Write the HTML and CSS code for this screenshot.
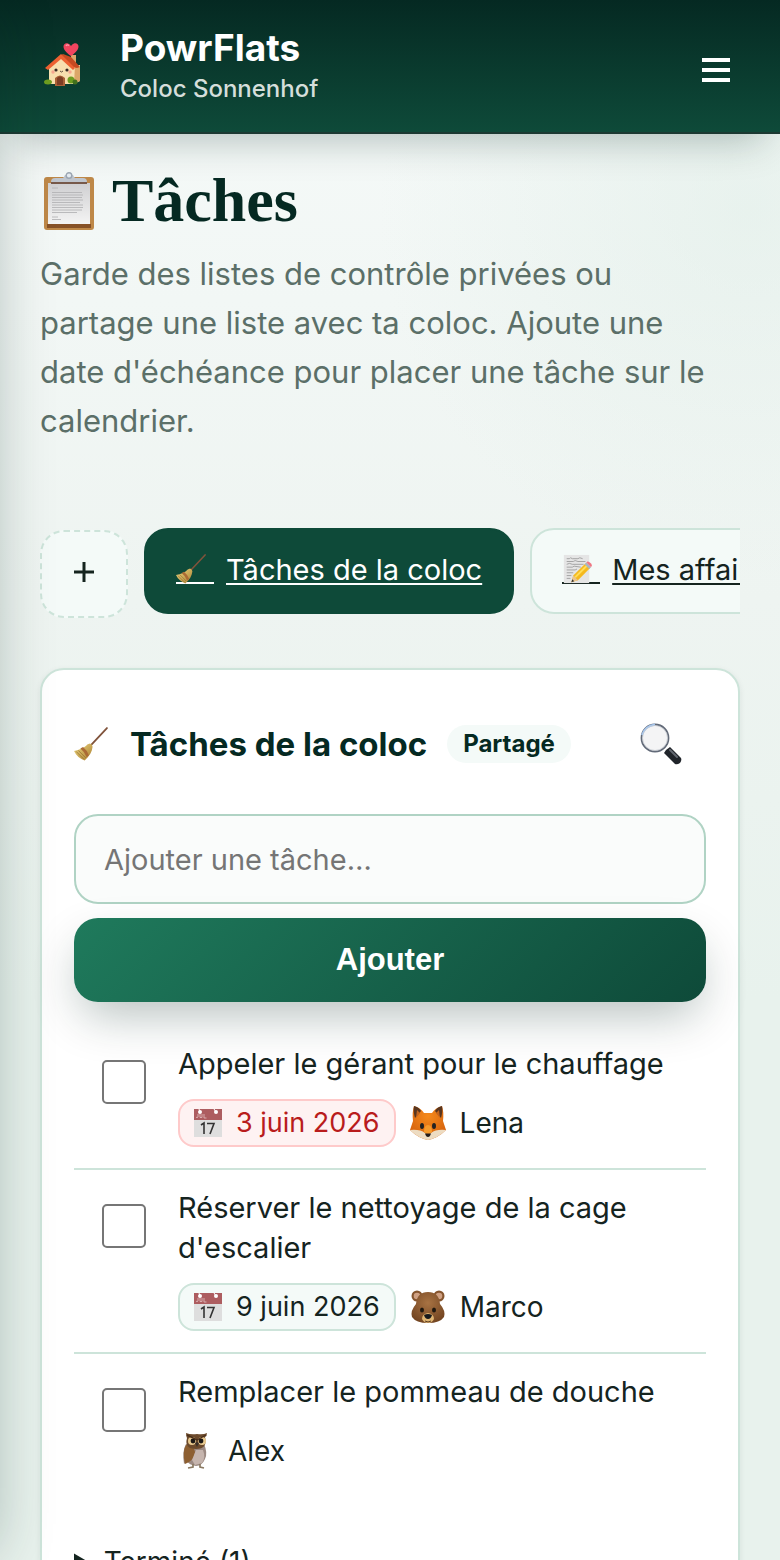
FILE: index.html
```html
<!DOCTYPE html>
<html lang="fr">
<head>
    <meta charset="UTF-8">
    <meta name="viewport" content="width=device-width, initial-scale=1.0">
    <title>Tâches - PowrFlats</title>
    <link rel="stylesheet" href="styles.css">
</head>
<body>
    <!-- Shared icons -->
    <svg class="sprite" aria-hidden="true">
        <defs>
            <linearGradient id="straw" x1="0" y1="0" x2="1" y2="1">
                <stop offset="0" stop-color="#f0dc86"/>
                <stop offset="1" stop-color="#a87b2c"/>
            </linearGradient>
            <linearGradient id="paper" x1="0" y1="0" x2="0" y2="1">
                <stop offset="0" stop-color="#cfcfd1"/>
                <stop offset="1" stop-color="#f4f4f4"/>
            </linearGradient>
            <radialGradient id="fur" cx=".5" cy=".35" r=".7">
                <stop offset="0" stop-color="#a87343"/>
                <stop offset="1" stop-color="#70421f"/>
            </radialGradient>
            <radialGradient id="foxfur" cx=".5" cy=".3" r=".7">
                <stop offset="0" stop-color="#f58a1c"/>
                <stop offset="1" stop-color="#d35f0c"/>
            </radialGradient>
        </defs>
        <symbol id="broom" viewBox="0 0 32 32">
            <path d="M31 1 16 17" stroke="#80533b" stroke-width="1.7" stroke-linecap="round"/>
            <path d="M15 15.500q2 .5 2.500 3c-.5 5-3 9-7.500 13C6 30 2 27 0 22.500c5-1 10-3 12.500-6z" fill="url(#straw)"/>
            <path d="M6 20.200q4 3 6 8.300l2-2q-1.500-4.500-5.500-7.700z" fill="#ab6b35"/>
            <path d="m2 23 7 7M4 22l7 7" stroke="#8b6427" stroke-width=".6"/>
        </symbol>
        <symbol id="calendar" viewBox="0 0 28 28">
            <path d="M0 0h28v28H0z" fill="#dedede"/>
            <path d="M0 0h28v11H0z" fill="#ad5d60"/>
            <circle cx="6" cy="3" r="2" fill="#fff"/>
            <circle cx="22" cy="3" r="2" fill="#fff"/>
            <path d="M5 0l1 3M20 0l2 3" stroke="#fff" stroke-width="1"/>
            <path d="M4 5v3q-1 1.500-2 0M6 5v3.500h2V5M10 5v4h2.500" fill="none" stroke="#dcb4b5" stroke-width=".9"/>
            <path d="m7 16 3-2v11M13 14.500h7L16 25" fill="none" stroke="#333" stroke-width="1.600"/>
        </symbol>
    </svg>

    <aside class="drawer" aria-hidden="true"></aside>

    <header class="topbar">
        <svg class="logo" viewBox="0 0 38 46" aria-hidden="true">
            <path d="M27 12h5v12h-5z" fill="#d9a66b"/>
            <path d="m5 23 13-10 13 10 5-1v16l-6 3H5z" fill="#f8dfae"/>
            <path d="m31 23 5 1v14l-6 2z" fill="#dca668"/>
            <path d="m17 12 2-1 8 3 9 10-3 1-5-1z" fill="#c64a21"/>
            <path d="M1 25 17 11l14 14-2 2-12-11L4 27z" fill="#ed6131"/>
            <path d="M11 43v-8q5-5 10 0v8z" fill="#aa6037"/>
            <path d="M13 42v-7q3-3 6 0v7z" fill="#7e3d24"/>
            <ellipse cx="4" cy="39" rx="4" ry="2.500" fill="#6e9d20"/>
            <circle cx="27" cy="37" r="3.500" fill="#6e9d20"/>
            <circle cx="31" cy="39" r="2.500" fill="#426f1d"/>
            <circle cx="12" cy="27" r="1.600" fill="#3a2a24"/>
            <circle cx="23" cy="27" r="1.600" fill="#3a2a24"/>
            <circle cx="9" cy="29" r="1.700" fill="#f6a790"/>
            <circle cx="26" cy="29" r="1.700" fill="#f6a790"/>
            <path d="M16 28q1.500 2 3 0" fill="none" stroke="#3a2a24" stroke-width=".8"/>
            <path d="M27 13C16 6 19-1 24 .5q2 .5 3 2.500 1-2 3-2.500c5-1.500 8 5.500-3 12.500z" fill="#f0455f"/>
            <path d="M22 3q1-2 3-.5" fill="none" stroke="#ff9dab" stroke-width="1.300"/>
        </svg>
        <div class="brand">
            <span class="brand-name">PowrFlats</span>
            <span class="brand-sub">Coloc Sonnenhof</span>
        </div>
        <button type="button" class="menu-btn" aria-label="Menu">
            <span></span>
            <span></span>
            <span></span>
        </button>
    </header>

    <main>
        <h1>
            <svg class="clipboard" viewBox="0 0 50 58" aria-hidden="true">
                <rect y="5" width="50" height="53" rx="3" fill="#be8848"/>
                <path d="M3 52h44v4H3z" fill="#875127"/>
                <path d="M4 11h42v41H4z" fill="url(#paper)"/>
                <path d="M8 16h6M8 20.500h30M8 23h31M8 25.500h30M8 28h31M8 30.500h28M8 33h31M8 35.500h31M8 38h30M8 40.500h25M8 45h6M8 47.500h9" stroke="#b4b4b7" stroke-width=".9"/>
                <path d="M7 10h36v2H7z" fill="#77594a"/>
                <path d="M7 10q0-4 4-4h8q1-1 2-3h8q1 2 2 3h8q4 0 4 4z" fill="#bfc5cd"/>
                <circle cx="25" cy="3.500" r="2.800" fill="#e4eaf0" stroke="#9ba6b2" stroke-width="1.400"/>
            </svg>
            Tâches
        </h1>
        <p class="intro">Garde des listes de contrôle privées ou partage une liste avec ta coloc. Ajoute une date d'échéance pour placer une tâche sur le calendrier.</p>

        <nav class="tabs" aria-label="Listes">
            <button type="button" class="tab-add" aria-label="Nouvelle liste">
                <svg viewBox="0 0 20 20" aria-hidden="true"><path d="M10 0v20M0 10h20" stroke="#15241f" stroke-width="3"/></svg>
            </button>
            <a href="#coloc" class="tab active">
                <span class="tab-icon"><svg viewBox="0 0 32 32" aria-hidden="true"><use href="#broom"/></svg></span>
                <span class="tab-text">Tâches de la coloc</span>
            </a>
            <a href="#perso" class="tab">
                <span class="tab-icon">
                    <svg viewBox="0 0 32 32" aria-hidden="true">
                        <path d="M2 1h27v30H2z" fill="#e5e5e5"/>
                        <path d="M5 5h3l1-1 2 1h6l2-1 3 1M5 8h7l2-1 3 1h8M5 11l3-1 3 1h12M5 14h6l2-1 7 1M5 17h9l2-1M5 20h7M5 23h5M5 26h4" fill="none" stroke="#999" stroke-width=".9"/>
                        <path d="m10 30 2-7L25 10l5 5-13 13z" fill="#f5b91e"/>
                        <path d="m14 25 13-13" stroke="#ffdd58" stroke-width="2"/>
                        <path d="m10 30 2-7 5 5z" fill="#e9c390"/>
                        <path d="m10 30 1-3 2 2z" fill="#333"/>
                        <path d="m24 11 2-2 5 5-2 2z" fill="#a9b7c0"/>
                        <path d="m26 9 1-1q3 0 5 4l-1 2z" fill="#ef7783"/>
                    </svg>
                </span>
                <span class="tab-text">Mes affaires</span>
            </a>
        </nav>

        <section class="card" id="coloc">
            <div class="card-head">
                <svg class="card-icon" viewBox="0 0 32 32" aria-hidden="true"><use href="#broom"/></svg>
                <h2>Tâches de la coloc</h2>
                <span class="badge">Partagé</span>
                <button type="button" class="search-btn" aria-label="Rechercher">
                    <svg viewBox="0 0 42 42" aria-hidden="true">
                        <path d="m26 27 4-3 11 11q1 2-1 5-3 2-5 1L24 30z" fill="#20242a"/>
                        <path d="m30 27 7 7" stroke="#646a72" stroke-width="2" stroke-linecap="round"/>
                        <circle cx="15" cy="15" r="13.500" fill="#f4f4f5" stroke="#626a78" stroke-width="1.800"/>
                        <path d="M2 12Q5 3 15 1.500" fill="none" stroke="#a5c6ee" stroke-width="2"/>
                        <circle cx="15" cy="15" r="12.500" fill="none" stroke="#c8ccd2" stroke-width=".8"/>
                    </svg>
                </button>
            </div>

            <form class="add-form">
                <input type="text" name="task" placeholder="Ajouter une tâche…" aria-label="Ajouter une tâche">
                <button type="submit">Ajouter</button>
            </form>

            <ul class="tasks">
                <li>
                    <input type="checkbox" id="task1">
                    <div class="task-body">
                        <label for="task1">Appeler le gérant pour le chauffage</label>
                        <div class="meta">
                            <span class="due late"><svg viewBox="0 0 28 28" aria-hidden="true"><use href="#calendar"/></svg>3 juin 2026</span>
                            <span class="person">
                                <svg viewBox="0 0 36 36" aria-hidden="true">
                                    <path d="M4 1q7 2 10 7h8Q25 3 32 1q2 6 1 15l3 9q-8 8-18 10Q8 33 0 25l3-9Q2 7 4 1z" fill="url(#foxfur)"/>
                                    <path d="M4 1q5 1 7 5l-6 7Q3 6 4 1zM32 1q-5 1-7 5l6 7q2-7 1-12z" fill="#59361f"/>
                                    <path d="m7 5 3 3-4 5zM29 5l-3 3 4 5z" fill="#c5651d"/>
                                    <path d="M0 25q10-1 15 3 3 2 6 0 5-4 15-3-8 8-18 10Q8 33 0 25z" fill="#eddcc2"/>
                                    <path d="M18 20q4 0 4 7l-4 3-4-3q0-7 4-7z" fill="#f69b2c"/>
                                    <ellipse cx="12" cy="21" rx="2" ry="3" fill="#222"/>
                                    <ellipse cx="24" cy="21" rx="2" ry="3" fill="#222"/>
                                    <path d="M15 28.500h6q-1 3.500-3 3.500t-3-3.500z" fill="#241b18"/>
                                </svg>
                                Lena
                            </span>
                        </div>
                    </div>
                </li>
                <li>
                    <input type="checkbox" id="task2">
                    <div class="task-body">
                        <label for="task2">Réserver le nettoyage de la cage d'escalier</label>
                        <div class="meta">
                            <span class="due"><svg viewBox="0 0 28 28" aria-hidden="true"><use href="#calendar"/></svg>9 juin 2026</span>
                            <span class="person">
                                <svg viewBox="0 0 36 36" aria-hidden="true">
                                    <circle cx="7" cy="7" r="5.500" fill="#86552e"/>
                                    <circle cx="29" cy="7" r="5.500" fill="#86552e"/>
                                    <circle cx="7" cy="7" r="3.300" fill="#d0a183"/>
                                    <circle cx="29" cy="7" r="3.300" fill="#d0a183"/>
                                    <path d="M18 3q11 0 12 12 6 7 4 13-4 6-16 6T2 28q-2-6 4-13Q7 3 18 3z" fill="url(#fur)"/>
                                    <path d="M18 24q6 1 6 6-2 4-6 4t-6-4q0-5 6-6z" fill="#dfb573"/>
                                    <ellipse cx="12" cy="21" rx="2" ry="2.600" fill="#20180f"/>
                                    <ellipse cx="24" cy="21" rx="2" ry="2.600" fill="#20180f"/>
                                    <path d="M14 26q4-2 8 0-1 4-4 4t-4-4z" fill="#17191c"/>
                                    <path d="M15 32q3 2 6 0" fill="none" stroke="#5c3d20"/>
                                </svg>
                                Marco
                            </span>
                        </div>
                    </div>
                </li>
                <li>
                    <input type="checkbox" id="task3">
                    <div class="task-body">
                        <label for="task3">Remplacer le pommeau de douche</label>
                        <div class="meta">
                            <span class="person">
                                <svg viewBox="0 0 36 36" aria-hidden="true">
                                    <path d="M8 11h18q4 9 1 15-3 7-9 7-7-1-9-5l-3 3q-2-13 2-20z" fill="#9c8a83"/>
                                    <path d="M8 12q8 0 9 7 0 8-10 12-3-12 1-19z" fill="#8d5f31"/>
                                    <path d="M18 17h7q3 8-1 13l-7 2-3-5z" fill="#c6b5ae"/>
                                    <path d="M8 0q5 2 11 1 6 1 10-1 0 3-2 4 3 12-9 12T9 5q-1-2-1-5z" fill="#6c4a2c"/>
                                    <circle cx="14" cy="8" r="4" fill="#e8c98f"/>
                                    <circle cx="24" cy="8" r="4" fill="#e8c98f"/>
                                    <circle cx="15" cy="8" r="2.400" fill="#1b1715"/>
                                    <circle cx="23" cy="8" r="2.400" fill="#1b1715"/>
                                    <path d="m9 2 10 5 9-5" fill="none" stroke="#4a301c" stroke-width="1.400"/>
                                    <path d="m17 10 2-1 2 1-2 4z" fill="#3a3029"/>
                                    <path d="M15 31v3l-5 1M22 31v3l4 1" fill="none" stroke="#8b7a62" stroke-width="1.700"/>
                                </svg>
                                Alex
                            </span>
                        </div>
                    </div>
                </li>
            </ul>

            <details class="done">
                <summary>Terminé (1)</summary>
            </details>
        </section>
    </main>
</body>
</html>
```

FILE: styles.css
```css
* {
    box-sizing: border-box;
}

body {
    margin: 0;
    min-height: 100vh;
    font-family: Inter, "Liberation Sans", sans-serif;
    font-size: 28px;
    line-height: 40px;
    color: #15241f;
    background:
        radial-gradient(circle at 96% 210px, rgba(221, 236, 229, .5), transparent 370px),
        linear-gradient(180deg, #f6faf9 0, #eef4f1 600px, #e8f2ed 1000px);
    overflow-x: hidden;
}

a {
    color: inherit;
}

button {
    font-family: inherit;
    cursor: pointer;
}

svg {
    display: block;
    flex-shrink: 0;
}

.sprite {
    position: absolute;
    width: 0;
    height: 0;
}

/* closed side menu, only its shadow reaches the page */
.drawer {
    position: fixed;
    top: 0;
    bottom: 0;
    right: 100%;
    width: 300px;
    box-shadow: 0 0 56px -8px rgba(5, 41, 34, .3);
    z-index: 5;
}

.topbar {
    display: flex;
    align-items: center;
    height: 134px;
    padding: 0 40px 0 44px;
    background: linear-gradient(180deg, #052922, #0e4a39);
    border-bottom: 2px solid #1c3932;
    box-shadow: 0 20px 40px -16px rgba(5, 41, 34, .3);
}

.logo {
    width: 38px;
    height: 46px;
}

.brand {
    display: flex;
    flex-direction: column;
    margin-top: 4px;
    margin-left: 38px;
}

.brand-name {
    font-size: 37px;
    line-height: 42px;
    font-weight: 700;
    color: #fff;
}

.brand-sub {
    font-size: 24px;
    line-height: 40px;
    font-weight: 500;
    color: #d5dedb;
}

.menu-btn {
    display: flex;
    flex-direction: column;
    gap: 6px;
    margin-left: auto;
    margin-top: 8px;
    padding: 10px;
    background: none;
    border: 0;
}

.menu-btn span {
    width: 28px;
    height: 4px;
    background: #fff;
}

main {
    padding: 32px 40px 40px;
}

h1 {
    display: flex;
    align-items: center;
    gap: 18px;
    margin: 0 0 14px;
    padding-left: 4px;
    font-family: "Liberation Serif", serif;
    font-size: 62px;
    line-height: 69px;
    color: #052922;
}

.clipboard {
    width: 50px;
    height: 58px;
}

.intro {
    max-width: 680px;
    margin: 0 0 83px;
    font-size: 31px;
    line-height: 49px;
    color: #5b6f68;
}

.tabs {
    display: flex;
    align-items: flex-start;
    gap: 16px;
    height: 90px;
    margin-bottom: 50px;
    overflow: hidden;
}

.tab-add {
    display: flex;
    align-items: center;
    justify-content: center;
    flex-shrink: 0;
    width: 88px;
    height: 88px;
    margin-top: 2px;
    padding: 0 0 4px;
    background: #f4faf8;
    border: 2px dashed #cde4da;
    border-radius: 24px;
}

.tab-add svg {
    width: 20px;
    height: 20px;
}

.tab {
    display: flex;
    flex-shrink: 0;
    gap: 12px;
    height: 86px;
    padding: 20px 30px;
    font-size: 29px;
    background: #f4faf8;
    border: 2px solid #cde4da;
    border-radius: 24px;
    text-decoration: none;
    white-space: nowrap;
}

.tab.active {
    background: #0e4a39;
    border-color: #0e4a39;
    color: #fff;
}

.tab-icon {
    width: 38px;
    height: 34px;
    padding-top: 4px;
    border-bottom: 2px solid currentColor;
}

.tab-icon svg {
    width: 30px;
    height: 30px;
}

.tab-text {
    text-decoration: underline;
    text-decoration-thickness: 2px;
    text-underline-offset: 3px;
}

.card {
    padding: 32px;
    background: #fff;
    border: 2px solid #cde4da;
    border-radius: 24px;
    box-shadow: 0 2px 6px rgba(5, 41, 34, .08);
}

.card-head {
    display: flex;
    align-items: center;
    height: 84px;
    margin-bottom: 28px;
}

.card-icon {
    width: 34px;
    height: 34px;
}

.card-head h2 {
    margin: 0 20px 0 22px;
    font-size: 33px;
    font-weight: 700;
    color: #052922;
}

.badge {
    padding: 0 16px;
    font-size: 24px;
    line-height: 38px;
    font-weight: 700;
    color: #052922;
    background: #f4faf8;
    border-radius: 19px;
}

.search-btn {
    margin-left: auto;
    padding: 20px 24px;
    background: none;
    border: 0;
}

.search-btn svg {
    width: 42px;
    height: 42px;
}

.add-form {
    display: grid;
    gap: 14px;
    margin-bottom: 24px;
}

.add-form input {
    width: 100%;
    height: 90px;
    padding: 0 28px;
    font-family: inherit;
    font-size: 29px;
    background: #fafcfb;
    border: 2px solid #b0d3c4;
    border-radius: 24px;
}

.add-form input::placeholder {
    color: #757575;
}

.add-form button {
    height: 84px;
    font-family: "Liberation Sans", Arial, sans-serif;
    font-size: 31px;
    font-weight: 700;
    color: #fff;
    background: linear-gradient(135deg, #1f7a5c, #0e4a39);
    border: 0;
    border-radius: 24px;
    box-shadow: 0 20px 48px -8px rgba(5, 41, 34, .3);
}

.tasks {
    margin: 0;
    padding: 0;
    list-style: none;
}

.tasks li {
    display: flex;
    gap: 32px;
    padding: 18px 0 20px 28px;
}

.tasks li + li {
    border-top: 2px solid #cde4da;
}

.tasks input {
    flex-shrink: 0;
    width: 44px;
    height: 44px;
    margin: 16px 0 0;
    appearance: none;
    background: #fff;
    border: 2px solid #767676;
    border-radius: 5px;
}

.tasks input:checked {
    background: #0e4a39;
}

.tasks label {
    display: block;
    font-size: 29px;
}

.meta {
    display: flex;
    align-items: center;
    gap: 14px;
    height: 50px;
    margin-top: 14px;
    font-size: 28px;
}

.due {
    display: flex;
    align-items: center;
    gap: 14px;
    height: 48px;
    padding: 0 14px;
    font-size: 27px;
    background: #f4faf8;
    border: 2px solid #cde4da;
    border-radius: 16px;
}

.due.late {
    color: #b91c1c;
    background: #fef2f2;
    border-color: #fecaca;
}

.due svg {
    width: 28px;
    height: 28px;
}

.person {
    display: flex;
    align-items: center;
    gap: 14px;
}

.person svg {
    width: 36px;
    height: 36px;
}

.done {
    margin-top: 46px;
}
```
